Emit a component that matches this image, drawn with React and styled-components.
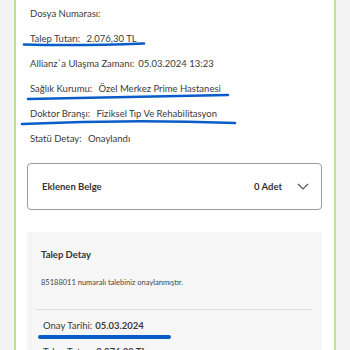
import React from 'react'
import styled, { createGlobalStyle } from 'styled-components'

const Global = createGlobalStyle`
  html, body {
    margin: 0;
    padding: 0;
    background: #f3f3f3;
    font-family: Lato, "Noto Sans", sans-serif;
    color: #3a3a3a;
  }
  #root {
    height: 350px;
    overflow: hidden;
  }
`

const Frame = styled.div`
  position: relative;
  margin: 0 14px;
  min-height: 360px;
  background: #fff;
  border-left: 2px solid #bde09a;
  border-right: 2px solid #bde09a;
  padding: 1px 12px 0 11px;
`

const InfoList = styled.div`
  display: flex;
  flex-direction: column;
  padding-left: 3px;
`

const InfoRow = styled.div`
  height: 25px;
  line-height: 25px;
  font-size: 9.5px;
  white-space: nowrap;
  span {
    margin-left: 4px;
  }
`

const DocBox = styled.div`
  margin-top: 12px;
  height: 47px;
  box-sizing: border-box;
  border: 1px solid #9a9a9a;
  border-radius: 4px;
  display: flex;
  align-items: center;
  padding: 0 12px 0 14px;
  font-size: 9.5px;
  font-weight: 700;
  color: #333;
`

const DocTitle = styled.div`
  flex: 1;
`

const DocCount = styled.div`
  margin-right: 15px;
`

const DetailCard = styled.div`
  margin-top: 22px;
  background: #f6f6f6;
  padding: 17px 10px 0 14px;
  min-height: 140px;
`

const CardTitle = styled.div`
  font-size: 9.5px;
  font-weight: 700;
  color: #333;
`

const Message = styled.div`
  margin-top: 18px;
  font-size: 7.5px;
  color: #444;
`

const Divider = styled.div`
  margin: 22px 0 0 -6px;
  height: 1px;
  background: #dcdcdc;
`

const DetailRow = styled.div`
  margin-top: ${(p) => p.gap}px;
  padding-left: 2px;
  font-size: 9.5px;
  white-space: nowrap;
  b {
    font-weight: 700;
    margin-left: 3px;
  }
`

const Marks = styled.svg`
  position: absolute;
  left: -16px;
  top: 0;
  pointer-events: none;
`

const Chevron = () => (
  <svg width="12" height="7" viewBox="0 0 12 7">
    <path d="M1 1l5 5 5-5" fill="none" stroke="#555" strokeWidth="1.2" />
  </svg>
)

const rows = [
  ['Dosya Numarası:', ''],
  ['Talep Tutarı:', ' 2.076,30 TL'],
  ['Allianz`a Ulaşma Zamanı:', '05.03.2024 13:23'],
  ['Sağlık Kurumu:', ' Özel Merkez Prime Hastanesi'],
  ['Doktor Branşı:', ' Fiziksel Tıp Ve Rehabilitasyon'],
  ['Statü Detay:', ' Onaylandı'],
]

const App = () => (
  <>
    <Global />
    <Frame>
      <InfoList>
        {rows.map(([label, value]) => (
          <InfoRow key={label}>
            {label}
            {value && <span>{value}</span>}
          </InfoRow>
        ))}
      </InfoList>
      <DocBox>
        <DocTitle>Eklenen Belge</DocTitle>
        <DocCount>0 Adet</DocCount>
        <Chevron />
      </DocBox>
      <DetailCard>
        <CardTitle>Talep Detay</CardTitle>
        <Message>85188011 numaralı talebiniz onaylanmıştır.</Message>
        <Divider />
        <DetailRow gap={10}>
          Onay Tarihi:<b>05.03.2024</b>
        </DetailRow>
        <DetailRow gap={15}>
          Talep Tutarı:<b>2.076,30 TL</b>
        </DetailRow>
      </DetailCard>
      <Marks width="350" height="350" viewBox="0 0 350 350">
        <g fill="none" stroke="#0a5cc8" strokeLinecap="round">
          <path d="M24 44.5 Q80 46 144 43.5" strokeWidth="2.6" />
          <path d="M28 99 Q130 97 228 95" strokeWidth="2.6" />
          <path d="M22 124 Q130 119 235 123" strokeWidth="2.6" />
          <path d="M40 337 L169 337" strokeWidth="4" />
        </g>
      </Marks>
    </Frame>
  </>
)

export default App
